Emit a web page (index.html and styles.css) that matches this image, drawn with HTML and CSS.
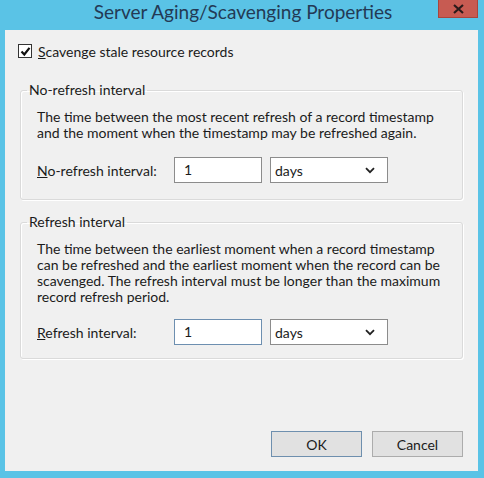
FILE: index.html
```html
<!DOCTYPE html>
<html lang="en">
<head>
  <meta charset="UTF-8" />
  <title>Server Aging/Scavenging Properties</title>
  <link rel="stylesheet" href="styles.css">
</head>
<body>
  <div class="window">
    <div class="titlebar">
      <span></span>
      <div class="title">Server Aging/Scavenging Properties</div>
      <div class="close-btn">
        <svg width="11" height="10" viewBox="0 0 11 10">
          <path d="M1 1 L10 9 M10 1 L1 9" stroke="#2a1a1a" stroke-width="2.2" />
        </svg>
      </div>
    </div>

    <div class="panel">
      <label class="check-row">
        <span class="checkbox">
          <svg width="11" height="11" viewBox="0 0 11 11">
            <path d="M1.5 5.5 L4.3 8.5 L9.5 1.8" fill="none" stroke="#111" stroke-width="2.2" />
          </svg>
        </span>
        <span><u>S</u>cavenge stale resource records</span>
      </label>

      <fieldset class="group group-norefresh">
        <legend>No-refresh interval</legend>
        <div class="group-body">
          <p class="desc">The time between the most recent refresh of a record timestamp and the moment when the timestamp may be refreshed again.</p>
          <div class="field-row">
            <span class="field-label"><u>N</u>o-refresh interval:</span>
            <div class="text-box">1</div>
            <div class="combo">
              <span>days</span>
              <svg width="10" height="7" viewBox="0 0 10 7">
                <path d="M1 1.2 L5 5.2 L9 1.2" fill="none" stroke="#222" stroke-width="1.8" />
              </svg>
            </div>
          </div>
        </div>
      </fieldset>

      <fieldset class="group group-refresh">
        <legend>Refresh interval</legend>
        <div class="group-body">
          <p class="desc">The time between the earliest moment when a record timestamp can be refreshed and the earliest moment when the record can be scavenged. The refresh interval must be longer than the maximum record refresh period.</p>
          <div class="field-row">
            <span class="field-label"><u>R</u>efresh interval:</span>
            <div class="text-box focused">1</div>
            <div class="combo">
              <span>days</span>
              <svg width="10" height="7" viewBox="0 0 10 7">
                <path d="M1 1.2 L5 5.2 L9 1.2" fill="none" stroke="#222" stroke-width="1.8" />
              </svg>
            </div>
          </div>
        </div>
      </fieldset>

      <div class="buttons">
        <button class="btn btn-default">OK</button>
        <button class="btn">Cancel</button>
      </div>
    </div>
  </div>
</body>
</html>
```

FILE: styles.css
```css
* {
  margin: 0;
  padding: 0;
  box-sizing: border-box;
}

body {
  background: #5ac3e6;
  width: 484px;
  height: 478px;
  overflow: hidden;
  font-family: Lato, "Open Sans", sans-serif;
  font-size: 14px;
  color: #1b1b1b;
}

.window {
  display: flex;
  flex-direction: column;
  height: 100%;
}

.titlebar {
  display: grid;
  grid-template-columns: 1fr auto 1fr;
  align-items: start;
  height: 30px;
}

.title {
  font-size: 19px;
  color: #233a55;
  line-height: 24px;
  padding-left: 2px;
}

.close-btn {
  justify-self: end;
  margin-right: 6px;
  width: 40px;
  height: 18px;
  background: #c75b52;
  border: 1px solid #a8453d;
  border-top: none;
  display: flex;
  justify-content: center;
  align-items: center;
}

.panel {
  margin: 0 6px 0 5px;
  height: 441px;
  background: #f0f0f0;
  padding: 13px 15px 0 13px;
  display: flex;
  flex-direction: column;
}

.check-row {
  display: flex;
  align-items: center;
  gap: 6px;
  height: 16px;
}

.checkbox {
  width: 14px;
  height: 14px;
  border: 1px solid #333;
  background: #fff;
  display: flex;
  justify-content: center;
  align-items: center;
}

.group {
  border: 1px solid #dadada;
  border-radius: 3px;
  box-shadow: inset 1px 1px 0 #fff, 1px 1px 0 #fff;
  margin-left: 2px;
  padding: 10px 18px 16px 6px;
  min-width: 0;
}

.group-norefresh {
  margin-top: 22px;
}

.group-refresh {
  margin-top: 13px;
  padding-bottom: 13px;
}

.group-refresh .field-row {
  margin-top: 14px;
}

legend {
  padding: 0 2px;
  line-height: 18px;
}

.group-body {
  padding-left: 10px;
}

.desc {
  line-height: 16px;
}

.field-row {
  display: flex;
  align-items: center;
  margin-top: 16px;
}

.field-label {
  width: 137px;
}

.text-box {
  width: 88px;
  height: 26px;
  background: #fff;
  border: 1px solid #8c8c8c;
  padding: 3px 0 0 9px;
  margin-right: 8px;
}

.text-box.focused {
  border-color: #6d8fb0;
}

.combo {
  width: 118px;
  height: 26px;
  background: #fff;
  border: 1px solid #8c8c8c;
  display: flex;
  justify-content: space-between;
  align-items: center;
  padding: 0 12px 0 4px;
}

.buttons {
  margin-top: auto;
  margin-bottom: 14px;
  display: flex;
  justify-content: flex-end;
  gap: 10px;
}

.btn {
  width: 91px;
  height: 26px;
  font-family: inherit;
  font-size: 14px;
  color: #1b1b1b;
  background: #e1e1e1;
  border: 1px solid #acacac;
}

.btn-default {
  border-color: #6e8fae;
}
```
